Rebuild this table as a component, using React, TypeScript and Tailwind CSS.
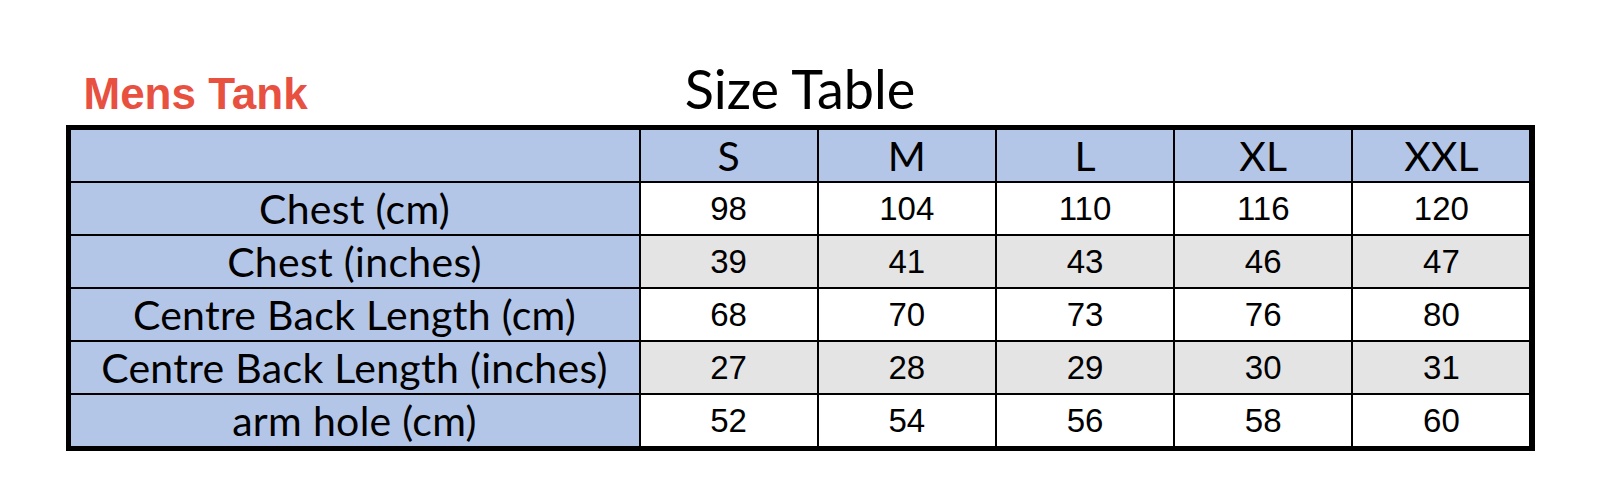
const sizes = ["S", "M", "L", "XL", "XXL"];

const rows: { label: string; values: number[]; shaded?: boolean }[] = [
  { label: "Chest (cm)", values: [98, 104, 110, 116, 120] },
  { label: "Chest (inches)", values: [39, 41, 43, 46, 47], shaded: true },
  { label: "Centre Back Length (cm)", values: [68, 70, 73, 76, 80] },
  { label: "Centre Back Length (inches)", values: [27, 28, 29, 30, 31], shaded: true },
  { label: "arm hole (cm)", values: [52, 54, 56, 58, 60] },
];

const calibri = "font-['Lato','Open_Sans',sans-serif]";
const arial = "font-['Liberation_Sans',Arial,sans-serif]";

export default function App() {
  return (
    <div className="min-h-[499px] w-full bg-white pt-[62px]">
      <div className="mx-auto w-[1469px]">
        {/* Heading row: product name left, table title centred over the table */}
        <div className="grid grid-cols-[1fr_auto_1fr] items-baseline pb-[9px]">
          <div className={`${arial} pl-[18px] text-[44px] font-bold leading-none text-[#e8503f]`}>
            Mens Tank
          </div>
          <div className={`${calibri} text-[54px] leading-none text-black`}>Size Table</div>
          <div />
        </div>

        <div className="grid grid-cols-[568px_repeat(5,1fr)] auto-rows-[51px] gap-[2px] border-[5px] border-black bg-black">
          <div className="bg-[#b4c6e7]" />
          {sizes.map((s) => (
            <div
              key={s}
              className={`${calibri} flex items-center justify-center bg-[#b4c6e7] text-[41px] text-black`}
            >
              {s}
            </div>
          ))}

          {rows.map((row) => (
            <div key={row.label} className="contents">
              <div
                className={`${calibri} flex items-center justify-center bg-[#b4c6e7] text-[41px] tracking-[0.3px] text-black`}
              >
                {row.label}
              </div>
              {row.values.map((v, i) => (
                <div
                  key={i}
                  className={`${arial} flex items-center justify-center text-[33px] text-black ${
                    row.shaded ? "bg-[#e5e4e5]" : "bg-white"
                  }`}
                >
                  {v}
                </div>
              ))}
            </div>
          ))}
        </div>
      </div>
    </div>
  );
}
